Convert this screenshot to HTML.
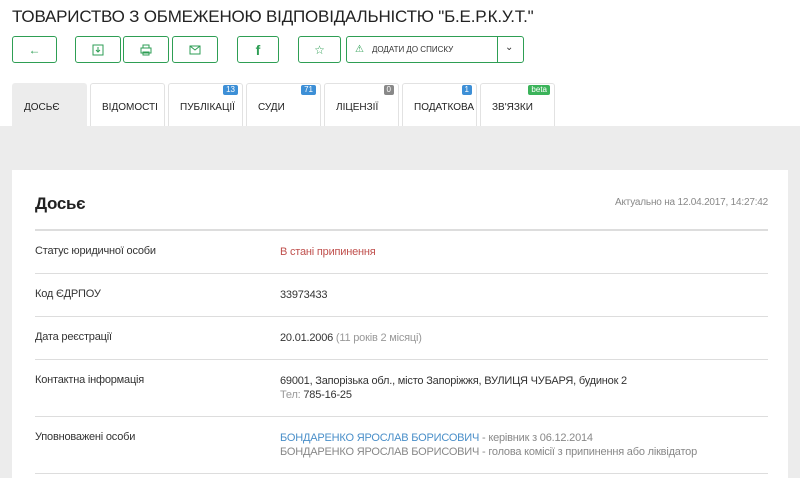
<!DOCTYPE html><html><head><meta charset="utf-8"><style>
*{box-sizing:border-box;margin:0;padding:0}
body{width:800px;height:478px;overflow:hidden;background:#fff;font-family:"Liberation Sans",sans-serif;color:#333;position:relative}
.a{position:absolute}
h1{position:absolute;left:12px;top:7px;font-size:17px;font-weight:normal;color:#222;letter-spacing:-0.2px;white-space:nowrap}
.btn{position:absolute;top:36px;height:27px;border:1px solid #2e9e54;border-radius:3px;background:#fff;color:#2e9e54;display:flex;align-items:center;justify-content:center;font-size:12px}
.tab{position:absolute;top:83px;height:43px;width:75px;border:1px solid #e2e2e2;border-bottom:none;border-radius:3px 3px 0 0;background:#fff;font-size:10px;color:#222;display:flex;align-items:center;padding-left:11px;padding-top:4px}
.badge{position:absolute;top:1px;right:4px;font-size:8px;color:#fff;padding:0 3px;border-radius:2px;line-height:10px}
.gray{position:absolute;left:0;top:126px;width:800px;height:352px;background:#ececec}
.card{position:absolute;left:12px;top:170px;width:776px;height:320px;background:#fff}
.lbl{position:absolute;left:35px;font-size:11px;color:#333;letter-spacing:-0.2px}
.val{position:absolute;left:280px;font-size:11px;color:#333;letter-spacing:-0.2px;line-height:14px}
.ln{position:absolute;left:35px;width:733px;height:1px;background:#ddd}
</style></head><body>
<h1>ТОВАРИСТВО З ОБМЕЖЕНОЮ ВІДПОВІДАЛЬНІСТЮ "Б.Е.Р.К.У.Т."</h1>
<div class="btn" style="left:12px;width:45px">←</div>
<div class="btn" style="left:75px;width:46px"><svg width="12" height="12" viewBox="0 0 12 12" fill="none" stroke="#2e9e54"><rect x="1" y="1" width="10" height="10"/><path d="M6 3v5M4 6l2 2 2-2"/></svg></div>
<div class="btn" style="left:123px;width:46px"><svg width="12" height="12" viewBox="0 0 12 12" fill="none" stroke="#2e9e54"><rect x="3" y="1" width="6" height="3"/><rect x="1" y="4" width="10" height="5"/><rect x="3" y="8" width="6" height="3"/></svg></div>
<div class="btn" style="left:172px;width:46px"><svg width="12" height="10" viewBox="0 0 12 10" fill="none" stroke="#2e9e54"><rect x="1" y="1" width="10" height="8"/><path d="M1 1l5 4 5-4"/></svg></div>
<div class="btn" style="left:237px;width:42px;font-weight:bold;font-size:14px">f</div>
<div class="btn" style="left:298px;width:43px">☆</div>
<div class="btn" style="left:346px;width:178px;justify-content:flex-start;padding-left:8px;font-size:8px;color:#333"><span style="color:#2e9e54;font-size:10px;margin-right:8px">⚠</span>ДОДАТИ ДО СПИСКУ<span style="position:absolute;left:150px;top:0;width:1px;height:25px;background:#2e9e54"></span><span style="position:absolute;left:158px;top:5px;color:#333;font-size:10px">⌄</span></div>
<div class="gray"></div>
<div class="tab" style="left:12px;background:#ececec;border-color:#ececec">ДОСЬЄ</div>
<div class="tab" style="left:90px">ВІДОМОСТІ</div>
<div class="tab" style="left:168px">ПУБЛІКАЦІЇ<span class="badge" style="background:#3d8fd6">13</span></div>
<div class="tab" style="left:246px">СУДИ<span class="badge" style="background:#3d8fd6">71</span></div>
<div class="tab" style="left:324px">ЛІЦЕНЗІЇ<span class="badge" style="background:#888">0</span></div>
<div class="tab" style="left:402px">ПОДАТКОВА<span class="badge" style="background:#3d8fd6">1</span></div>
<div class="tab" style="left:480px">ЗВ'ЯЗКИ<span class="badge" style="background:#3bb35a">beta</span></div>
<div class="card"></div>
<div class="a" style="left:35px;top:194px;font-size:17px;color:#222;font-weight:bold;letter-spacing:-0.3px">Досьє</div>
<div class="a" style="left:590px;top:197px;width:178px;text-align:right;font-size:10px;color:#888;letter-spacing:-0.2px">Актуально на 12.04.2017, 14:27:42</div>
<div class="ln" style="top:229px;height:2px;background:#ddd"></div>
<div class="lbl" style="top:245px">Статус юридичної особи</div><div class="val" style="top:245px;color:#c0504d">В стані припинення</div>
<div class="ln" style="top:273px"></div>
<div class="lbl" style="top:288px">Код ЄДРПОУ</div><div class="val" style="top:288px">33973433</div>
<div class="ln" style="top:316px"></div>
<div class="lbl" style="top:331px">Дата реєстрації</div><div class="val" style="top:331px">20.01.2006 <span style="color:#999">(11 років 2 місяці)</span></div>
<div class="ln" style="top:359px"></div>
<div class="lbl" style="top:374px">Контактна інформація</div><div class="val" style="top:374px">69001, Запорізька обл., місто Запоріжжя, ВУЛИЦЯ ЧУБАРЯ, будинок 2<br><span style="color:#999">Тел:</span> 785-16-25</div>
<div class="ln" style="top:416px"></div>
<div class="lbl" style="top:431px">Уповноважені особи</div><div class="val" style="top:431px;color:#888"><span style="color:#4a8fc9">БОНДАРЕНКО ЯРОСЛАВ БОРИСОВИЧ</span> - керівник з 06.12.2014<br>БОНДАРЕНКО ЯРОСЛАВ БОРИСОВИЧ - голова комісії з припинення або ліквідатор</div>
<div class="ln" style="top:473px"></div>
</body></html>
